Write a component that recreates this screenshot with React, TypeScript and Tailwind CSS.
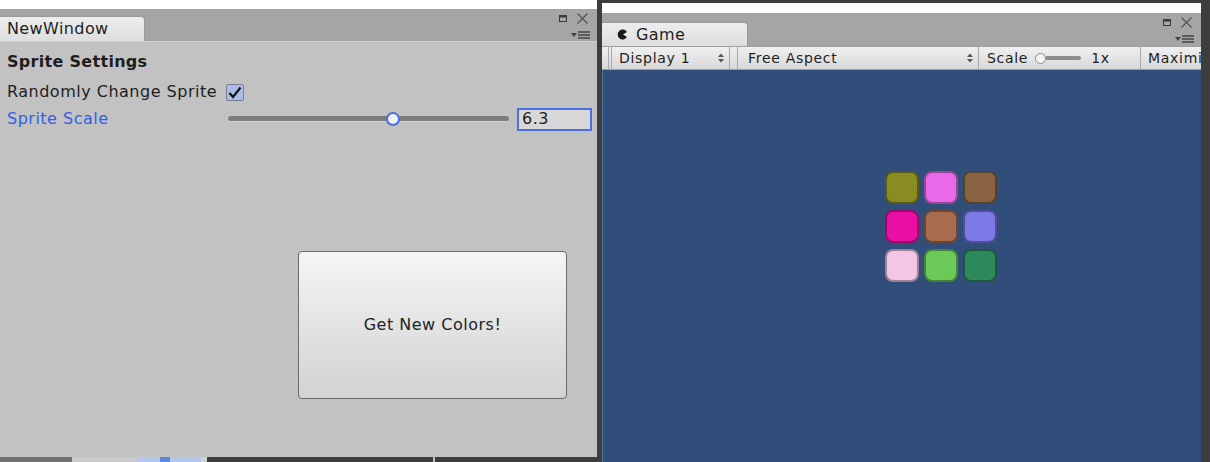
import React from "react";

// Editor window tab controls (maximize, close, menu)
function WindowControls() {
  return (
    <div className="flex flex-col items-end self-start pt-[4px] pr-[9px]">
      <div className="flex h-[11px] items-center gap-[10px]">
        <svg width="8" height="7" viewBox="0 0 8 7">
          <rect x="0.5" y="0.5" width="7" height="6" fill="none" stroke="#3a3a3a" />
          <rect x="0" y="0" width="8" height="2.5" fill="#3a3a3a" />
        </svg>
        <svg width="11" height="11" viewBox="0 0 11 11">
          <path d="M0.5 0.5 L10.5 10.5 M10.5 0.5 L0.5 10.5" stroke="#505050" strokeWidth="1.1" />
        </svg>
      </div>
      <div className="mt-[7px] -mr-[2px] flex items-center gap-[1px]">
        <svg width="6" height="4" viewBox="0 0 6 4">
          <path d="M0 0 H6 L3 4 Z" fill="#444" />
        </svg>
        <svg width="12" height="8" viewBox="0 0 12 8">
          <path d="M0 1 H12 M0 4 H12 M0 7 H12" stroke="#444" strokeWidth="1.3" />
        </svg>
      </div>
    </div>
  );
}

function UpDownArrow() {
  return (
    <svg width="6" height="10" viewBox="0 0 6 10">
      <path d="M0 4 L3 0.5 L6 4 Z M0 6 L3 9.5 L6 6 Z" fill="#555" />
    </svg>
  );
}

const tiles = [
  "bg-[#8b8b24]",
  "bg-[#e86ae8]",
  "bg-[#8a6442]",
  "bg-[#e80fa2]",
  "bg-[#a86c50]",
  "bg-[#7b78e8]",
  "bg-[#f4c6e6]",
  "bg-[#6bc957]",
  "bg-[#2c8a5a]",
];

export default function App() {
  return (
    <div className="flex h-[462px] w-[1210px] overflow-hidden bg-[#3d3d3d] font-['DejaVu_Sans',sans-serif] text-[#1e1e1e]">
      {/* NewWindow panel */}
      <section className="flex w-[597px] shrink-0 flex-col">
        <div className="h-[9px] bg-white" />
        <div className="flex h-[33px] items-end justify-between border-b border-[#d0d0d0] bg-[#a5a5a5]">
          <div className="flex h-[25px] w-[145px] items-center rounded-tr-[4px] border-t border-r border-[#9b9b9b] bg-linear-to-b from-[#ededed] to-[#dedede] pl-[7px] text-[16px] tracking-[0.4px]">
            NewWindow
          </div>
          <WindowControls />
        </div>

        <div className="flex flex-1 flex-col bg-[#c2c2c2] pt-[8px] pl-[7px] text-[16px] tracking-[0.5px]">
          <div className="flex h-[24px] items-center font-bold tracking-[0.3px]">Sprite Settings</div>

          <div className="mt-[6px] flex h-[24px] items-center">
            <span>Randomly Change Sprite</span>
            <div className="ml-[9px] flex h-[17px] w-[18px] items-center justify-center rounded-[2px] border border-[#7b7f8c] bg-[#a9bde8]">
              <svg width="14" height="13" viewBox="0 0 14 13">
                <path d="M1.5 7 L5 11 L12.5 1.5" fill="none" stroke="#111" strokeWidth="2.2" />
              </svg>
            </div>
          </div>

          <div className="mt-[3px] flex h-[24px] items-center">
            <span className="w-[221px] text-[#2f5fe6]">Sprite Scale</span>
            <div className="relative flex h-[14px] w-[281px] items-center">
              <div className="h-[6px] w-full rounded-full border-b border-[#d4d4d4] bg-[#7c7c7c]" />
              <div className="absolute top-0 left-[158px] h-[14px] w-[14px] rounded-full border-2 border-[#4a6fe0] bg-[#eef2fa]" />
            </div>
            <div className="ml-[8px] flex h-[23px] w-[75px] items-center border-2 border-[#4d6fe6] bg-[#d8d8d8] pl-[3px]">
              6.3
            </div>
          </div>

          <button className="mt-[120px] ml-[291px] flex h-[148px] w-[269px] items-center justify-center rounded-[4px] border border-[#6b6b6b] bg-linear-to-b from-[#f5f5f5] to-[#d2d2d2] text-[16px] tracking-[0.5px] text-[#222]">
            Get New Colors!
          </button>
        </div>

        <div className="flex h-[5px]">
          <div className="w-[72px] bg-[#707070]" />
          <div className="w-[65px] bg-[#cacaca]" />
          <div className="w-[23px] bg-[#b4c8ee]" />
          <div className="w-[10px] bg-[#5a86e0]" />
          <div className="w-[31px] bg-[#b4c8ee]" />
          <div className="w-[6px] bg-[#d0d0d0]" />
          <div className="w-[226px] bg-[#3d3d3d]" />
          <div className="w-[2px] bg-[#bdbdbd]" />
        </div>
      </section>

      <div className="w-[5px] shrink-0" />

      {/* Game panel */}
      <section className="flex w-[599px] min-w-0 shrink-0 flex-col overflow-hidden pt-[3px]">
        <div className="h-[10px] bg-white" />
        <div className="flex h-[33px] items-end justify-between bg-[#a5a5a5]">
          <div className="flex h-[24px] w-[146px] items-center gap-[8px] rounded-tr-[4px] border-t border-r border-[#9b9b9b] bg-linear-to-b from-[#ededed] to-[#dedede] pl-[15px] text-[16px] tracking-[0.4px]">
            <svg width="11" height="11" viewBox="0 0 11 11">
              <path d="M10 3 A5 5 0 1 0 10 8 L6 5.5 Z" fill="#1a1a1a" />
            </svg>
            <span>Game</span>
          </div>
          <WindowControls />
        </div>

        <div className="flex h-[24px] border-t border-b border-[#a0a0a0] bg-linear-to-b from-[#f0f0f0] to-[#d8d8d8] pl-[6px] text-[14px] tracking-[0.7px] whitespace-nowrap">
          <div className="w-[3px] shrink-0 border-l border-[#a8a8a8]" />
          <div className="flex w-[119px] shrink-0 items-center justify-between border-r border-l border-[#a8a8a8] pr-[5px] pl-[7px]">
            <span>Display 1</span>
            <UpDownArrow />
          </div>
          <div className="w-[7px] shrink-0" />
          <div className="flex w-[242px] shrink-0 items-center justify-between border-r border-l border-[#a8a8a8] pr-[5px] pl-[10px]">
            <span>Free Aspect</span>
            <UpDownArrow />
          </div>
          <div className="flex w-[162px] shrink-0 items-center border-r border-[#a8a8a8] pl-[8px]">
            <span>Scale</span>
            <div className="ml-[7px] flex items-center">
              <div className="z-10 h-[11px] w-[11px] rounded-full border border-[#8a8a8a] bg-[#f4f4f4]" />
              <div className="-ml-[1px] h-[4px] w-[36px] rounded-full bg-[#8c8c8c]" />
            </div>
            <span className="ml-[10px]">1x</span>
          </div>
          <div className="flex min-w-0 flex-1 items-center overflow-hidden pl-[7px]">Maximi</div>
        </div>

        <div className="flex-1 border-l border-[#5473a3] bg-[#314d79] pt-[101px] pl-[282px]">
          <div className="grid w-max grid-cols-3 gap-x-[5px] gap-y-[6px]">
            {tiles.map((c, i) => (
              <div key={i} className={`h-[33px] w-[34px] rounded-[8px] border-2 border-black/35 ${c}`} />
            ))}
          </div>
        </div>
      </section>

      <div className="w-[9px] shrink-0 bg-[#3d3d3d]" />
    </div>
  );
}
